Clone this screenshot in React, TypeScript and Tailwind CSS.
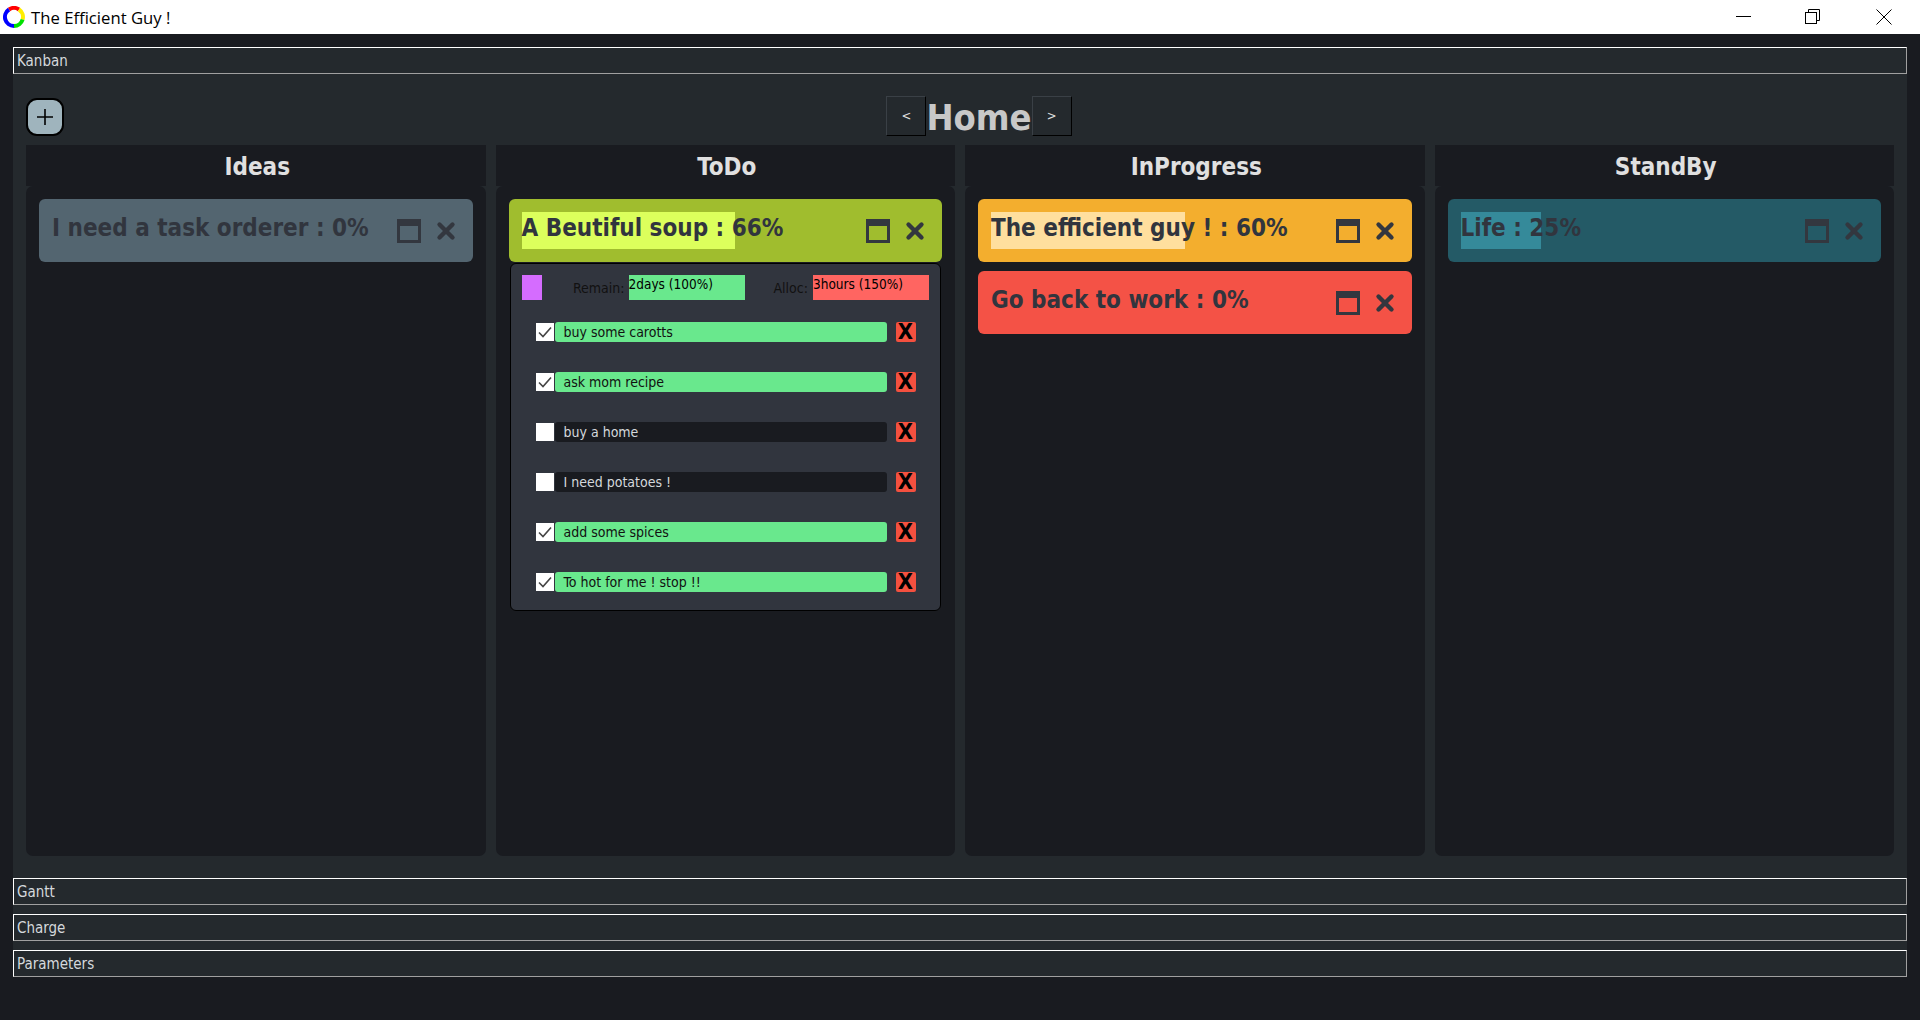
import { X } from 'lucide-react';

const tahoma = "font-['DejaVu_Sans_Condensed','DejaVu_Sans',sans-serif]";

type Card = { title: string; pct: number; bg: string; bar: string; open?: boolean };

const columns: { name: string; cards: Card[] }[] = [
  { name: 'Ideas', cards: [{ title: 'I need a task orderer : 0%', pct: 0, bg: 'bg-[#536570]', bar: 'bg-[#6d8490]' }] },
  { name: 'ToDo', cards: [{ title: 'A Beutiful soup : 66%', pct: 66, bg: 'bg-[#a0bd2e]', bar: 'bg-[#dcff5c]', open: true }] },
  {
    name: 'InProgress',
    cards: [
      { title: 'The efficient guy ! : 60%', pct: 60, bg: 'bg-[#f3ae2e]', bar: 'bg-[#ffdf9e]' },
      { title: 'Go back to work : 0%', pct: 0, bg: 'bg-[#f45246]', bar: 'bg-[#ff8a80]' },
    ],
  },
  { name: 'StandBy', cards: [{ title: 'Life : 25%', pct: 25, bg: 'bg-[#245a66]', bar: 'bg-[#358a9a]' }] },
];

const tasks = [
  { label: 'buy some carotts', done: true },
  { label: 'ask mom recipe', done: true },
  { label: 'buy a home', done: false },
  { label: 'I need potatoes !', done: false },
  { label: 'add some spices', done: true },
  { label: 'To hot for me ! stop !!', done: true },
];

function Logo() {
  return (
    <svg width="22" height="22" viewBox="0 0 22 22" fill="none" strokeWidth="4">
      <path d="M6 3.5 A9 9 0 0 1 16 3.5" stroke="#ff0000" />
      <path d="M16 3.5 A9 9 0 0 1 19.6 13.5" stroke="#ffee00" />
      <path d="M19.6 13.5 A9 9 0 0 1 11 20" stroke="#00e000" />
      <path d="M11 20 A9 9 0 0 1 6 3.5" stroke="#0000ff" />
    </svg>
  );
}

function WindowButtons() {
  return (
    <div className="flex h-full items-center">
      <svg width="15" height="1" className="mr-[54px] -mt-px">
        <rect width="15" height="1" fill="#000" />
      </svg>
      <svg width="16" height="16" viewBox="0 0 16 16" fill="none" stroke="#000" className="mr-[55px] -mt-px">
        <rect x="0.5" y="3.5" width="11" height="11" fill="#fff" />
        <path d="M3.5 3.5 V0.5 H14.5 V11.5 H11.5" />
      </svg>
      <svg width="16" height="16" viewBox="0 0 16 16" fill="none" stroke="#000" className="mr-[28px] -mt-px">
        <path d="M0.5 0.5 L15.5 15.5 M15.5 0.5 L0.5 15.5" />
      </svg>
    </div>
  );
}

function Tab({ label }: { label: string }) {
  return (
    <div className="flex h-[27px] items-center border border-t-white border-l-white border-r-[#a0a0a0] border-b-[#a0a0a0] bg-[#24292d] px-[3px] pt-px text-[15px] text-[#d4d8dc]">
      {label}
    </div>
  );
}

function CardHeader({ card }: { card: Card }) {
  return (
    <div className={`flex h-[63px] items-center justify-between rounded-[6px] pl-[13px] pr-[14px] ${card.bg}`}>
      <div className="relative flex h-[37px] items-center">
        <div className={`absolute left-0 top-0 h-full ${card.bar}`} style={{ width: `${card.pct * 3.23}px` }} />
        <span className={`relative -mt-[5px] text-[24px] font-bold whitespace-nowrap text-[#31353e] ${tahoma}`}>{card.title}</span>
      </div>
      <div className="flex items-center gap-3">
        <div className="h-6 w-6 border-[3px] border-t-[7px] border-[#33373f]" />
        <X size={26} strokeWidth={4} className="text-[#33373f]" />
      </div>
    </div>
  );
}

function TaskRow({ label, done }: { label: string; done: boolean }) {
  return (
    <div className="flex h-5 items-center pl-[14px]">
      <div className="flex h-[18px] w-[18px] items-center justify-center bg-white">
        {done && (
          <svg width="14" height="12" viewBox="0 0 14 12" fill="none" stroke="#444" strokeWidth="1.6">
            <path d="M1 6.5 L5 10.5 L13 1.5" />
          </svg>
        )}
      </div>
      <div
        className={`ml-px flex h-5 w-[332px] items-center rounded-[3px] pt-px pl-[9px] text-[14px] ${
          done ? 'bg-[#69e88d] text-[#111]' : 'bg-[#191b20] text-[#d4d8dc]'
        }`}
      >
        {label}
      </div>
      <div className="ml-[9px] flex h-5 w-5 items-center justify-center rounded-[2px] bg-[#f4503f] text-[22px] leading-5 font-bold text-black">
        X
      </div>
    </div>
  );
}

function CardDetail() {
  return (
    <div className="mx-px mt-px h-[348px] rounded-[6px] border border-black bg-[#31353e] px-[11px] pt-[11px]">
      <div className="flex h-[25px] text-[#111]">
        <div className="h-[25px] w-5 bg-[#d56cff]" />
        <span className="ml-auto self-end pb-px text-[14px]">Remain:</span>
        <div className="ml-[4px] h-[25px] w-[116px] bg-[#69e88d] text-[13.5px] leading-[18px] text-black">2days (100%)</div>
        <span className="ml-[29px] self-end pb-px text-[14px]">Alloc:</span>
        <div className="ml-[5px] h-[25px] w-[116px] bg-[#ff6561] text-[13.5px] leading-[18px] text-black">3hours (150%)</div>
      </div>
      <div className="mt-[22px] flex flex-col gap-[30px]">
        {tasks.map((t) => (
          <TaskRow key={t.label} label={t.label} done={t.done} />
        ))}
      </div>
    </div>
  );
}

function Column({ name, cards }: { name: string; cards: Card[] }) {
  return (
    <div className="flex min-w-0 flex-1 flex-col">
      <div className={`flex h-[41px] shrink-0 items-center justify-center bg-[#191b20] pt-[2px] pl-[3px] text-[24px] font-bold text-[#e0e0e0] ${tahoma}`}>
        {name}
      </div>
      <div className="flex flex-1 flex-col gap-[9px] rounded-[7px] bg-[#191b20] px-[13px] pt-[13px]">
        {cards.map((c) => (
          <div key={c.title}>
            <CardHeader card={c} />
            {c.open && <CardDetail />}
          </div>
        ))}
      </div>
    </div>
  );
}

function NavButton({ label }: { label: string }) {
  return (
    <div className="flex h-10 w-10 items-center justify-center border border-t-[#3a4046] border-l-[#3a4046] border-r-black border-b-black bg-[#24292d] text-[13px] text-[#e0e0e0]">
      {label}
    </div>
  );
}

export default function App() {
  return (
    <div className={`flex h-[1020px] w-[1920px] flex-col overflow-hidden bg-[#191b20] ${tahoma}`}>
      {/* Title bar */}
      <div className="flex h-[34px] shrink-0 items-center justify-between bg-white pl-[3px]">
        <div className="flex items-center gap-[6px]">
          <Logo />
          <span className="pt-px font-['Open_Sans',sans-serif] text-[16.7px] text-black">The Efficient Guy !</span>
        </div>
        <WindowButtons />
      </div>

      <div className="mx-[13px] mt-[13px] flex h-[930px] flex-col bg-[#24292d]">
        <Tab label="Kanban" />
        <div className="flex h-[804px] shrink-0 flex-col px-[13px]">
          <div className="flex h-[71px] shrink-0 items-end pb-[9px]">
            <button className="flex h-[38px] w-[38px] items-center justify-center rounded-[11px] border-2 border-black bg-[#9fb4bd] text-black">
              <svg width="18" height="18" viewBox="0 0 18 18" stroke="#000" strokeWidth="1.6">
                <path d="M9 1 V17 M1 9 H17" />
              </svg>
            </button>
            <div className="flex flex-1 justify-center">
              <NavButton label="<" />
              <span className="h-10 text-[36px] leading-[44px] font-bold text-[#c8c8c8]">Home</span>
              <NavButton label=">" />
            </div>
          </div>
          <div className="flex h-[711px] gap-[10px]">
            {columns.map((c) => (
              <Column key={c.name} name={c.name} cards={c.cards} />
            ))}
          </div>
        </div>
        <div className="flex flex-col gap-[9px]">
          <Tab label="Gantt" />
          <Tab label="Charge" />
          <Tab label="Parameters" />
        </div>
      </div>
    </div>
  );
}
